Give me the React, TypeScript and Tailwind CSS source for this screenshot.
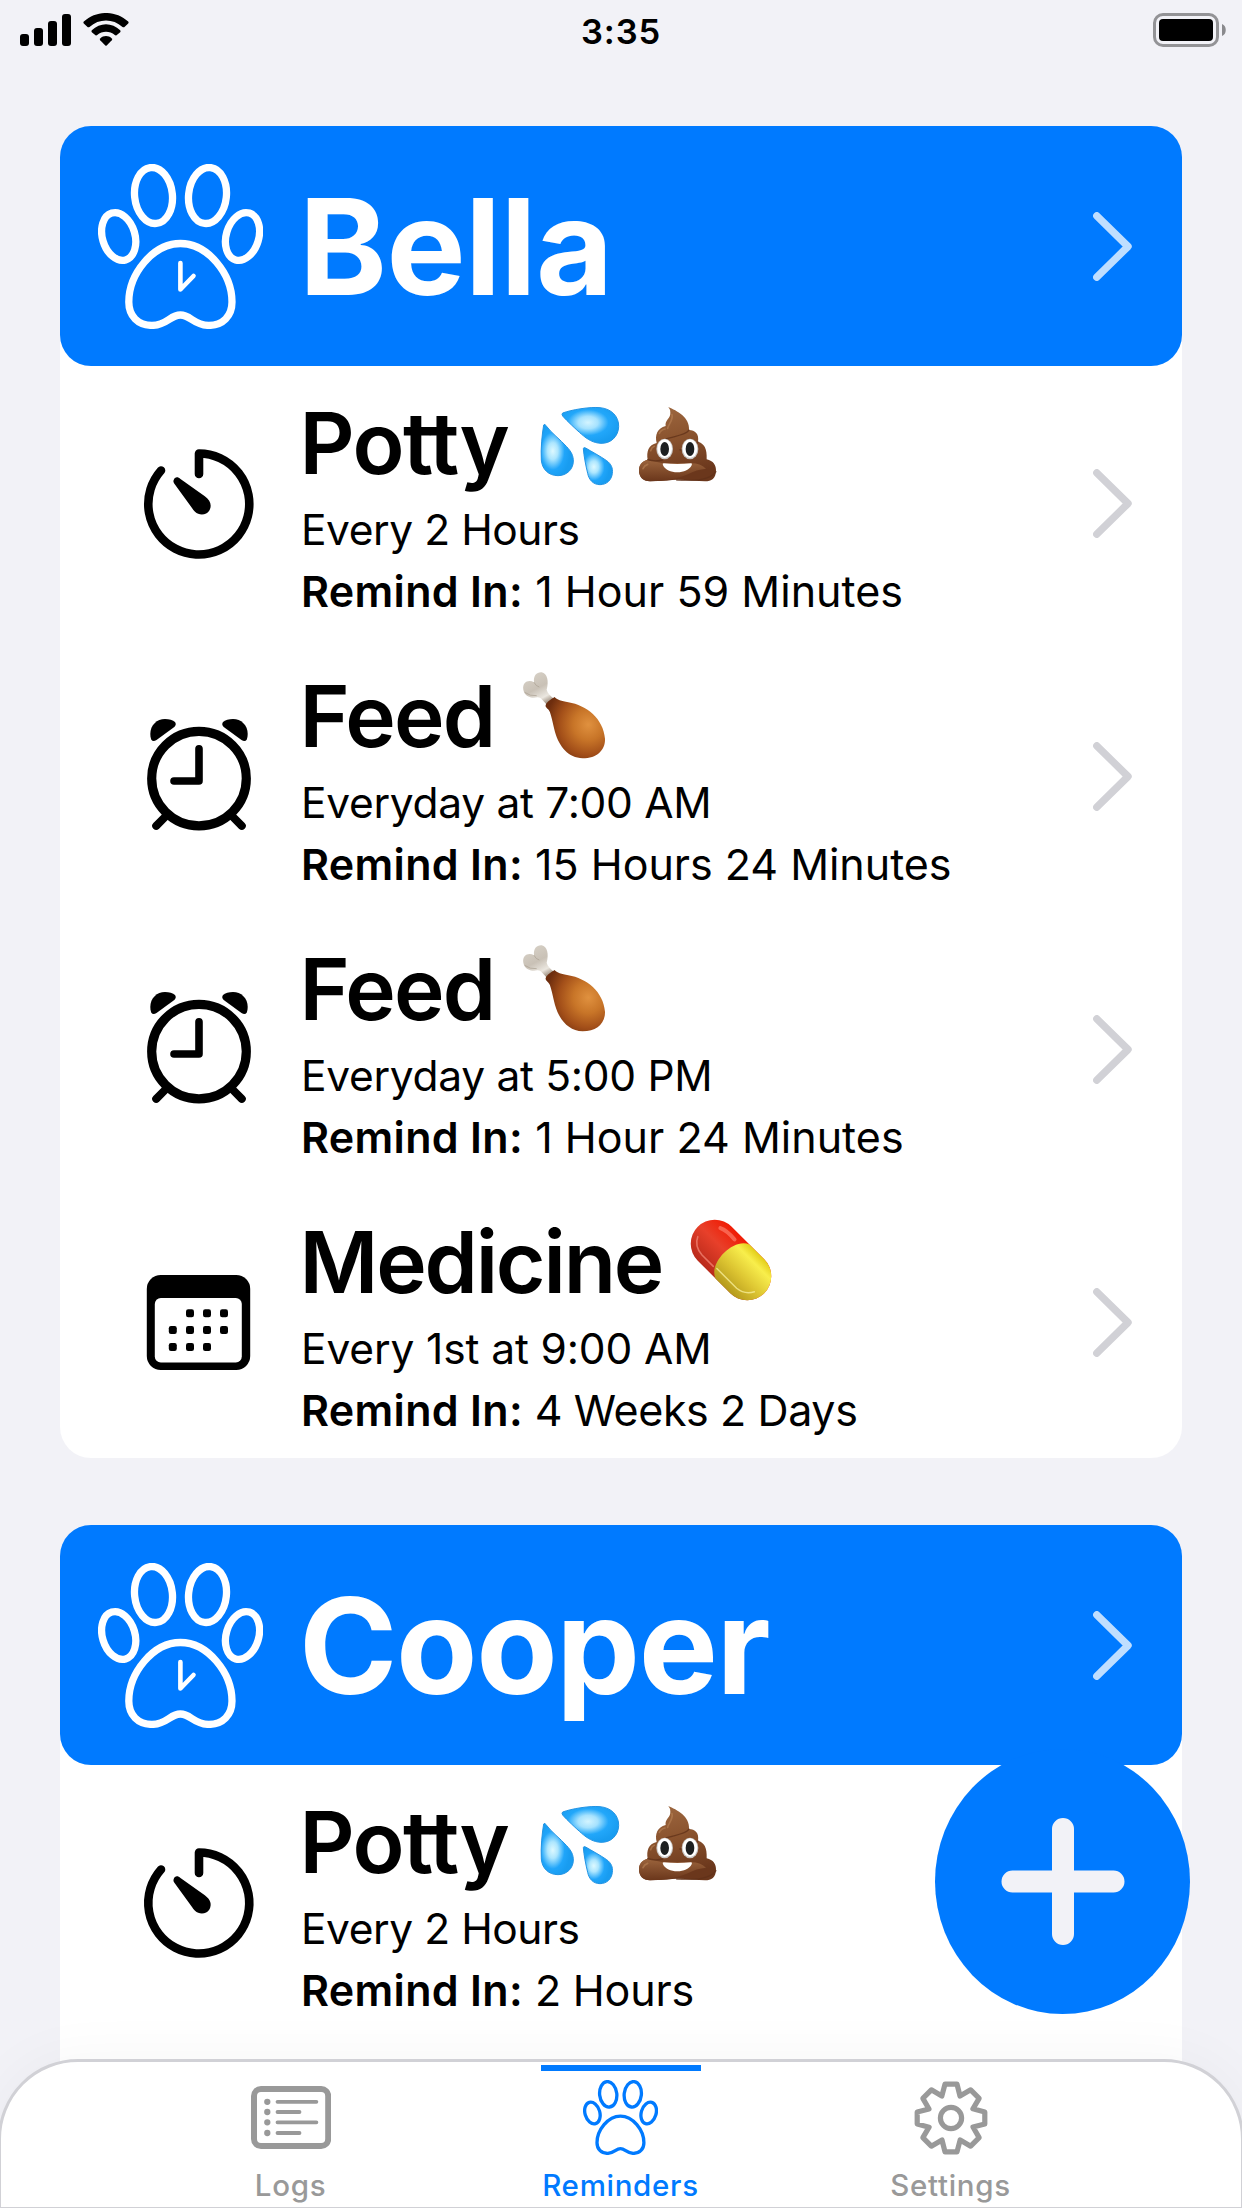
import type { ReactNode } from "react";

function Paw({ className, hands = false }: { className: string; hands?: boolean }) {
  return (
    <svg viewBox="0 0 165 165" className={className} fill="none" stroke="currentColor" strokeWidth="7.3">
      <ellipse cx="55.5" cy="31.5" rx="18.9" ry="28.1" transform="rotate(-6 55.5 31.5)" />
      <ellipse cx="109.5" cy="31.5" rx="18.9" ry="28.1" transform="rotate(6 109.5 31.5)" />
      <ellipse cx="20.7" cy="72.5" rx="16.3" ry="24.4" transform="rotate(-16.5 20.7 72.5)" />
      <ellipse cx="144.5" cy="72.5" rx="16.3" ry="24.4" transform="rotate(16.5 144.5 72.5)" />
      <path d="M82.4 79.5C55 79.5 30.8 110 30.8 138C30.8 152 40 161.4 54 161.4C69 161.4 72 151 82.4 151C92.8 151 95.8 161.4 110.8 161.4C124.8 161.4 134 152 134 138C134 110 109.8 79.5 82.4 79.5Z" />
      {hands && <path d="M82.4 99V125.5L95.5 112" strokeWidth="4.6" strokeLinecap="round" strokeLinejoin="round" />}
    </svg>
  );
}

function Chevron({ className }: { className: string }) {
  return (
    <svg viewBox="0 0 39 69" className={`h-[69px] w-[39px] ${className}`} fill="none" stroke="currentColor" strokeWidth="7.4" strokeLinecap="round" strokeLinejoin="round">
      <path d="M3.8 3.8L35 34.5L3.8 65.2" />
    </svg>
  );
}

function TimerIcon() {
  return (
    <svg viewBox="0 0 120 121" className="h-[121px] w-[120px]">
      <path d="M60 32V11.5A50.5 50.5 0 1 1 22 28.5" fill="none" stroke="#000" strokeWidth="8.6" strokeLinecap="round" strokeLinejoin="round" />
      <path d="M34.6 38.2C36 34.4 39 34.8 41.5 37L65.8 54.3C71.6 58.6 73 63.5 70.5 68.2C67.5 73.4 60.4 74 56 69.8Q54.5 68.5 53 66L35.2 41.5Q34 40 34.6 38.2Z" />
    </svg>
  );
}

function AlarmIcon() {
  const bell = "M11.3 19C11.3 10 18 4 26 4C30 4 34 5.3 36 7Q37.8 9.4 35.3 12L17.5 25Q14 27.4 12.2 24.5Q11.3 22 11.3 19Z";
  return (
    <svg viewBox="0 0 120 121" className="h-[121px] w-[120px]">
      <circle cx="60" cy="63.6" r="47.3" fill="none" stroke="#000" strokeWidth="9.2" />
      <path d="M60 33.8V66H35" fill="none" stroke="#000" strokeWidth="7.6" strokeLinecap="round" strokeLinejoin="round" />
      <path d="M17.2 110.8L28 100M102.8 110.8L92 100" stroke="#000" strokeWidth="8" strokeLinecap="round" />
      <path d={bell} />
      <path d={bell} transform="translate(120 0) scale(-1 1)" />
    </svg>
  );
}

function CalendarIcon() {
  const dots = [
    [51, 52.3], [68, 52.3], [85, 52.3],
    [33.8, 69], [51, 69], [68, 69], [85, 69],
    [33.8, 86], [51, 86], [68, 86],
  ];
  return (
    <svg viewBox="0 0 120 121" className="h-[121px] w-[120px]">
      <rect x="7.8" y="14" width="103.4" height="95" rx="14" />
      <rect x="15.8" y="37" width="87" height="64.5" rx="6" fill="#fff" />
      {dots.map(([x, y]) => (
        <rect key={`${x}-${y}`} x={x - 4} y={y - 4} width="8" height="8" rx="2.2" />
      ))}
    </svg>
  );
}

function Droplets() {
  return (
    <svg viewBox="0 0 240 240" role="img" aria-label="💦" className="mt-[13px] h-20 w-20 shrink-0">
      <defs>
        <radialGradient id="dropA" cx="0.46" cy="0.42" r="0.58">
          <stop offset="0" stopColor="#d3f4ff" />
          <stop offset="0.3" stopColor="#a6e2fe" />
          <stop offset="0.62" stopColor="#22a7fa" />
          <stop offset="1" stopColor="#189cf0" />
        </radialGradient>
        <radialGradient id="dropB" cx="0.36" cy="0.52" r="0.54">
          <stop offset="0" stopColor="#def9ff" />
          <stop offset="0.3" stopColor="#ade6fe" />
          <stop offset="0.68" stopColor="#20a5fa" />
          <stop offset="1" stopColor="#189cf0" />
        </radialGradient>
      </defs>
      <g transform="translate(-120 -78)" stroke="#2394e4" strokeWidth="3">
        <path fill="url(#dropA)" d="M188 99C215 89 270 80 300 83C335 86 357 110 356 140C355 170 332 191 303 190C280 189 262 178 245 163C228 148 200 122 188 108Q184 102 188 99Z" />
        <path fill="url(#dropB)" d="M131 135Q134 130 138 137C155 160 180 178 200 200C215 216 220 228 220 243C220 268 200 287 174 287C146 287 126 268 124 240C122 205 126 165 131 135Z" />
        <path fill="url(#dropB)" d="M250 206Q250 201 257 204C275 215 300 228 320 242C334 252 339 265 337 280C335 300 320 314 300 314C280 314 267 300 263 280C257 255 252 230 250 206Z" />
      </g>
    </svg>
  );
}

function Poop() {
  return (
    <svg viewBox="0 0 240 240" role="img" aria-label="💩" className="mt-[13px] ml-[18px] h-20 w-20 shrink-0">
      <defs>
        <linearGradient id="poopBody" x1="0" y1="0" x2="0.25" y2="1">
          <stop offset="0" stopColor="#a06a42" />
          <stop offset="0.5" stopColor="#8a532e" />
          <stop offset="1" stopColor="#6b371c" />
        </linearGradient>
        <linearGradient id="poopRoll" x1="0" y1="0" x2="0" y2="1">
          <stop offset="0" stopColor="#9a633c" />
          <stop offset="1" stopColor="#6a361b" />
        </linearGradient>
      </defs>
      <g transform="translate(-414 -78)">
        <path fill="url(#poopBody)" d="M505 81C530 92 570 112 567 150C585 150 598 162 594 185C612 190 622 205 620 238C640 242 649 257 648 273C647 295 635 304 615 304L580 302Q530 297 500 302L450 304C428 304 416 290 417 270C418 252 430 242 443 239C439 215 445 195 470 189C464 165 472 145 497 138C494 120 512 115 511 98Q511 88 505 81Z" />
        <path fill="url(#poopRoll)" d="M443 240C425 243 416 256 417 273C419 292 430 303 450 304Q520 302 560 284Q590 268 618 266Q600 250 575 250H488Z" />
        <path fill="none" stroke="#5f3018" strokeWidth="4" strokeLinecap="round" opacity="0.75" d="M567 150C560 163 530 168 500 176M594 186C585 198 560 204 540 210M443 239C460 244 475 243 488 240M648 275C630 300 590 303 530 300" />
        <path fill="none" stroke="#b98255" strokeWidth="5" strokeLinecap="round" opacity="0.6" d="M516 104C520 122 505 132 503 145M478 160Q482 150 495 147M452 212Q455 202 463 199M429 266Q433 256 443 253" />
        <ellipse cx="494" cy="207" rx="25" ry="31" fill="#c9c6c4" />
        <ellipse cx="570" cy="207" rx="25" ry="31" fill="#c9c6c4" />
        <ellipse cx="494" cy="206" rx="22" ry="28" fill="#fff" />
        <ellipse cx="570" cy="206" rx="22" ry="28" fill="#fff" />
        <ellipse cx="494" cy="207" rx="13" ry="21" fill="#1d1f20" />
        <ellipse cx="570" cy="207" rx="13" ry="21" fill="#1d1f20" />
        <path fill="#fff" d="M491 250Q532 254 573 250Q578 250 575 256C568 270 551 277 532 277C512 277 496 270 489 256Q486 250 491 250Z" />
      </g>
    </svg>
  );
}

function Drumstick() {
  return (
    <svg viewBox="0 0 252 264" role="img" aria-label="🍗" className="mt-[5px] h-[88px] w-[84px] shrink-0">
      <defs>
        <radialGradient id="meat" cx="0.72" cy="0.45" r="0.72">
          <stop offset="0" stopColor="#e0913f" />
          <stop offset="0.35" stopColor="#c87528" />
          <stop offset="0.68" stopColor="#a34f19" />
          <stop offset="1" stopColor="#6d2d0e" />
        </radialGradient>
        <linearGradient id="bone" x1="0.2" y1="0" x2="0.7" y2="1">
          <stop offset="0" stopColor="#d8d2c8" />
          <stop offset="0.5" stopColor="#c9c1b6" />
          <stop offset="0.8" stopColor="#ebe7e0" />
          <stop offset="1" stopColor="#9b8b7b" />
        </linearGradient>
      </defs>
      <g transform="translate(-1206 -62)">
        <path fill="url(#bone)" d="M1210 118C1206 97 1225 86 1242 96C1240 76 1250 65 1265 66C1282 70 1287 92 1280 118C1282 128 1292 137 1302 145L1280 163C1268 150 1262 140 1252 141C1232 145 1213 137 1210 118Z" />
        <path fill="none" stroke="#a99f92" strokeWidth="3" opacity="0.7" d="M1242 96Q1248 108 1258 110M1214 126Q1230 138 1250 136" />
        <path fill="url(#meat)" d="M1277 164C1280 155 1295 145 1304 140C1310 148 1325 152 1345 156C1400 165 1450 205 1455 265C1456 300 1430 324 1388 324C1345 322 1318 290 1305 245C1298 218 1293 190 1288 182C1284 174 1275 172 1277 164Z" />
      </g>
    </svg>
  );
}

function Pill() {
  return (
    <svg viewBox="0 0 82 82" role="img" aria-label="💊" className="mt-[7px] h-[82px] w-[82px] shrink-0">
      <defs>
        <linearGradient id="pillRed" x1="0" y1="0" x2="0" y2="1">
          <stop offset="0" stopColor="#f01c05" />
          <stop offset="0.45" stopColor="#e8402a" />
          <stop offset="1" stopColor="#b92a1b" />
        </linearGradient>
        <linearGradient id="pillYellow" x1="0" y1="0" x2="0" y2="1">
          <stop offset="0" stopColor="#e3cd18" />
          <stop offset="0.2" stopColor="#f8ee4c" />
          <stop offset="0.6" stopColor="#dcc431" />
          <stop offset="1" stopColor="#b59a1c" />
        </linearGradient>
      </defs>
      <g transform="translate(41 41) rotate(45)">
        <rect x="-47" y="-24" width="94" height="48" rx="24" fill="url(#pillRed)" />
        <path d="M2 -24C-14 -18 -14 18 2 24H23A24 24 0 0 0 23 -24Z" fill="url(#pillYellow)" />
        <path d="M-40 7Q-36 16 -24 17H-8" fill="none" stroke="#f58b7c" strokeWidth="1.6" strokeLinecap="round" opacity="0.7" />
        <path d="M-4 16H24Q34 15 39 6" fill="none" stroke="#f6ec95" strokeWidth="1.5" strokeLinecap="round" opacity="0.8" />
        <path d="M-30 -15Q-24 -18 -12 -17" fill="none" stroke="#ff8a78" strokeWidth="4" strokeLinecap="round" opacity="0.6" />
      </g>
    </svg>
  );
}

function DogHeader({ name, tracking }: { name: string; tracking: string }) {
  return (
    <div className="flex h-60 items-center rounded-[31px] bg-[#007aff] pr-[50px] pl-[38px] text-white">
      <Paw hands className="mt-px h-[165px] w-[165px] shrink-0" />
      <h2 className={`mt-0.5 ml-[36px] flex-1 text-[133px] leading-[160px] font-bold ${tracking}`}>{name}</h2>
      <Chevron className="mt-px text-[#bfdeff]" />
    </div>
  );
}

type RowProps = {
  icon: ReactNode;
  title: string;
  titleClass: string;
  emoji: ReactNode;
  schedule: string;
  scheduleClass?: string;
  remaining: string;
  remainingClass?: string;
};

function ReminderRow({
  icon,
  title,
  titleClass,
  emoji,
  schedule,
  scheduleClass = "tracking-[-0.3px]",
  remaining,
  remainingClass = "tracking-[0.03px]",
}: RowProps) {
  return (
    <div className="flex h-[273px] items-center pr-[50px] pl-[79px]">
      {icon}
      <div className="ml-[42px] h-full flex-1 pt-[27px] whitespace-nowrap">
        <div className="flex h-[100px] items-start">
          <h3 className={`-ml-[1.5px] shrink-0 text-[85.5px] leading-[100px] font-semibold ${titleClass}`}>{title}</h3>
          {emoji}
        </div>
        <p className={`mt-1.5 text-[42.5px] leading-[61px] ${scheduleClass}`}>{schedule}</p>
        <p className={`text-[43px] leading-[62px] ${remainingClass}`}>
          <span className="font-semibold tracking-[0.32px]">Remind In:</span> {remaining}
        </p>
      </div>
      <Chevron className="mt-px text-[#d1d1d6]" />
    </div>
  );
}

function PottyRow({ remaining, remainingClass }: { remaining: string; remainingClass?: string }) {
  return (
    <ReminderRow
      icon={<TimerIcon />}
      title="Potty"
      titleClass="w-[240.5px] tracking-[-1.5px]"
      emoji={<><Droplets /><Poop /></>}
      schedule="Every 2 Hours"
      scheduleClass="tracking-[-0.45px]"
      remaining={remaining}
      remainingClass={remainingClass}
    />
  );
}

function StatusBar() {
  return (
    <header className="grid h-[60px] grid-cols-3 items-start">
      <div className="flex gap-3 pt-[13px] pl-5">
        <svg viewBox="0 0 51 33" className="h-[33px] w-[51px]">
          <rect x="0" y="21" width="9" height="12" rx="3" />
          <rect x="14" y="15" width="9" height="18" rx="3" />
          <rect x="28" y="8" width="9" height="25" rx="3" />
          <rect x="42" y="1" width="9" height="32" rx="3" />
        </svg>
        <svg viewBox="0 0 46 33" className="h-[33px] w-[46px]">
          <path d="M0.8 8.6C13.5 -2.9 32.5 -2.9 45.2 8.6Q46 9.6 45.2 10.6L41.2 14.2Q40.4 14.6 39.5 14C30 5.4 16 5.4 6.5 14Q5.6 14.6 4.8 14.2L0.8 10.6Q0 9.6 0.8 8.6Z" />
          <path d="M8.8 17.2C17 9.2 29 9.2 37.2 17.2Q38 18.2 37.2 19.2L33.5 22.3Q32.6 22.8 31.8 22.1C26.7 17.8 19.3 17.8 14.2 22.1Q13.4 22.8 12.5 22.3L8.8 19.2Q8 18.2 8.8 17.2Z" />
          <path d="M17.2 25.4C20.6 22.2 25.4 22.2 28.8 25.4Q29.7 26.3 28.8 27.3L23.7 32.4Q23 33 22.3 32.4L17.2 27.3Q16.3 26.3 17.2 25.4Z" />
        </svg>
      </div>
      <div className="pt-[11px] text-center text-[34.5px] leading-[42px] font-semibold tracking-[0.9px]">3:35</div>
      <svg viewBox="0 0 74 34" className="mt-[13px] mr-4 h-[34px] w-[74px] justify-self-end">
        <rect x="2.5" y="1.5" width="63" height="31" rx="8.5" fill="none" stroke="#939396" strokeWidth="3" />
        <rect x="7" y="6" width="54" height="22" rx="4" />
        <path d="M70 11C75 12.5 75 21.5 70 23Z" fill="#8a8a8d" />
      </svg>
    </header>
  );
}

function LogsIcon() {
  return (
    <svg viewBox="0 0 80 63" className="mt-[23px] h-[63px] w-20" fill="none" stroke="currentColor">
      <rect x="3" y="3" width="74.2" height="57" rx="7" strokeWidth="6" />
      <path d="M26.5 15.8H65.4M26.5 26H48.5M26.5 36.3H65.4M26.5 47H48.5" strokeWidth="3.8" strokeLinecap="round" />
      <path d="M16.3 15.8h0M16.3 26h0M16.3 36.3h0M16.3 47h0" strokeWidth="6.3" strokeLinecap="round" />
    </svg>
  );
}

function GearIcon() {
  const profile = [[-6, -33.8], [6, -33.8], [9, -22]];
  const points = Array.from({ length: 8 }, (_, i) => {
    const a = (i * Math.PI) / 4;
    return profile.map(([x, y]) => `${(x * Math.cos(a) - y * Math.sin(a)).toFixed(2)},${(x * Math.sin(a) + y * Math.cos(a)).toFixed(2)}`).join(" ");
  }).join(" ");
  return (
    <svg viewBox="-37 -37 74 74" className="mt-[18px] h-[74px] w-[74px]" fill="none" stroke="currentColor" strokeWidth="5.2" strokeLinejoin="round">
      <polygon points={points} />
      <circle r="10.6" />
    </svg>
  );
}

function Tab({ label, icon, active = false }: { label: string; icon: ReactNode; active?: boolean }) {
  return (
    <div className={`relative flex h-full w-[330px] flex-col items-center ${active ? "text-[#007aff]" : "text-[#999999]"}`}>
      {active && <div className="absolute top-[1.5px] h-1.5 w-40 bg-[#007aff]" />}
      <div className="h-[104px]">{icon}</div>
      <span className="text-[29.5px] leading-[36px] font-medium tracking-[0.7px]">{label}</span>
    </div>
  );
}

export default function App() {
  return (
    <div className="relative h-[2208px] w-[1242px] overflow-hidden bg-[#f2f2f7] text-black [font-family:Inter,sans-serif]">
      <StatusBar />
      <main className="flex flex-col gap-[67px] px-[60px] pt-[66px]">
        <section className="rounded-[31px] bg-[linear-gradient(transparent_60px,white_60px)]">
          <DogHeader name="Bella" tracking="tracking-[-0.6px]" />
          <PottyRow remaining="1 Hour 59 Minutes" />
          <ReminderRow icon={<AlarmIcon />} title="Feed" titleClass="w-[222.5px] tracking-[-1.8px]" emoji={<Drumstick />} schedule="Everyday at 7:00 AM" remaining="15 Hours 24 Minutes" remainingClass="tracking-[-0.02px]" />
          <ReminderRow icon={<AlarmIcon />} title="Feed" titleClass="w-[222.5px] tracking-[-1.8px]" emoji={<Drumstick />} schedule="Everyday at 5:00 PM" remaining="1 Hour 24 Minutes" />
          <ReminderRow icon={<CalendarIcon />} title="Medicine" titleClass="w-[390.5px] tracking-[-2.2px]" emoji={<Pill />} schedule="Every 1st at 9:00 AM" scheduleClass="tracking-[-0.13px]" remaining="4 Weeks 2 Days" remainingClass="tracking-[-0.4px]" />
        </section>
        <section className="rounded-t-[31px] bg-[linear-gradient(transparent_60px,white_60px)] pb-20">
          <DogHeader name="Cooper" tracking="tracking-[-1.4px]" />
          <PottyRow remaining="2 Hours" remainingClass="tracking-[-0.2px]" />
        </section>
      </main>

      <button aria-label="Add reminder" className="absolute top-[1749px] left-[935px] flex h-[265px] w-[255px] items-center justify-center rounded-[50%] bg-[#007aff]">
        <svg viewBox="0 0 124 127" className="h-[127px] w-[124px]" fill="none" stroke="#f2f2f7" strokeWidth="22" strokeLinecap="round">
          <path d="M62 11V116M11.5 63.5H112.5" />
        </svg>
      </button>

      <nav className="absolute -right-0.5 -bottom-0.5 -left-0.5 flex h-[151px] justify-center rounded-t-[80px] border-[3px] border-[#d1d1d6] bg-white pt-px pr-px shadow-[0_0_60px_rgba(0,0,0,0.04)]">
        <Tab label="Logs" icon={<LogsIcon />} />
        <Tab label="Reminders" active icon={<Paw className="mt-[17px] h-[75px] w-[75px]" />} />
        <Tab label="Settings" icon={<GearIcon />} />
      </nav>
    </div>
  );
}
